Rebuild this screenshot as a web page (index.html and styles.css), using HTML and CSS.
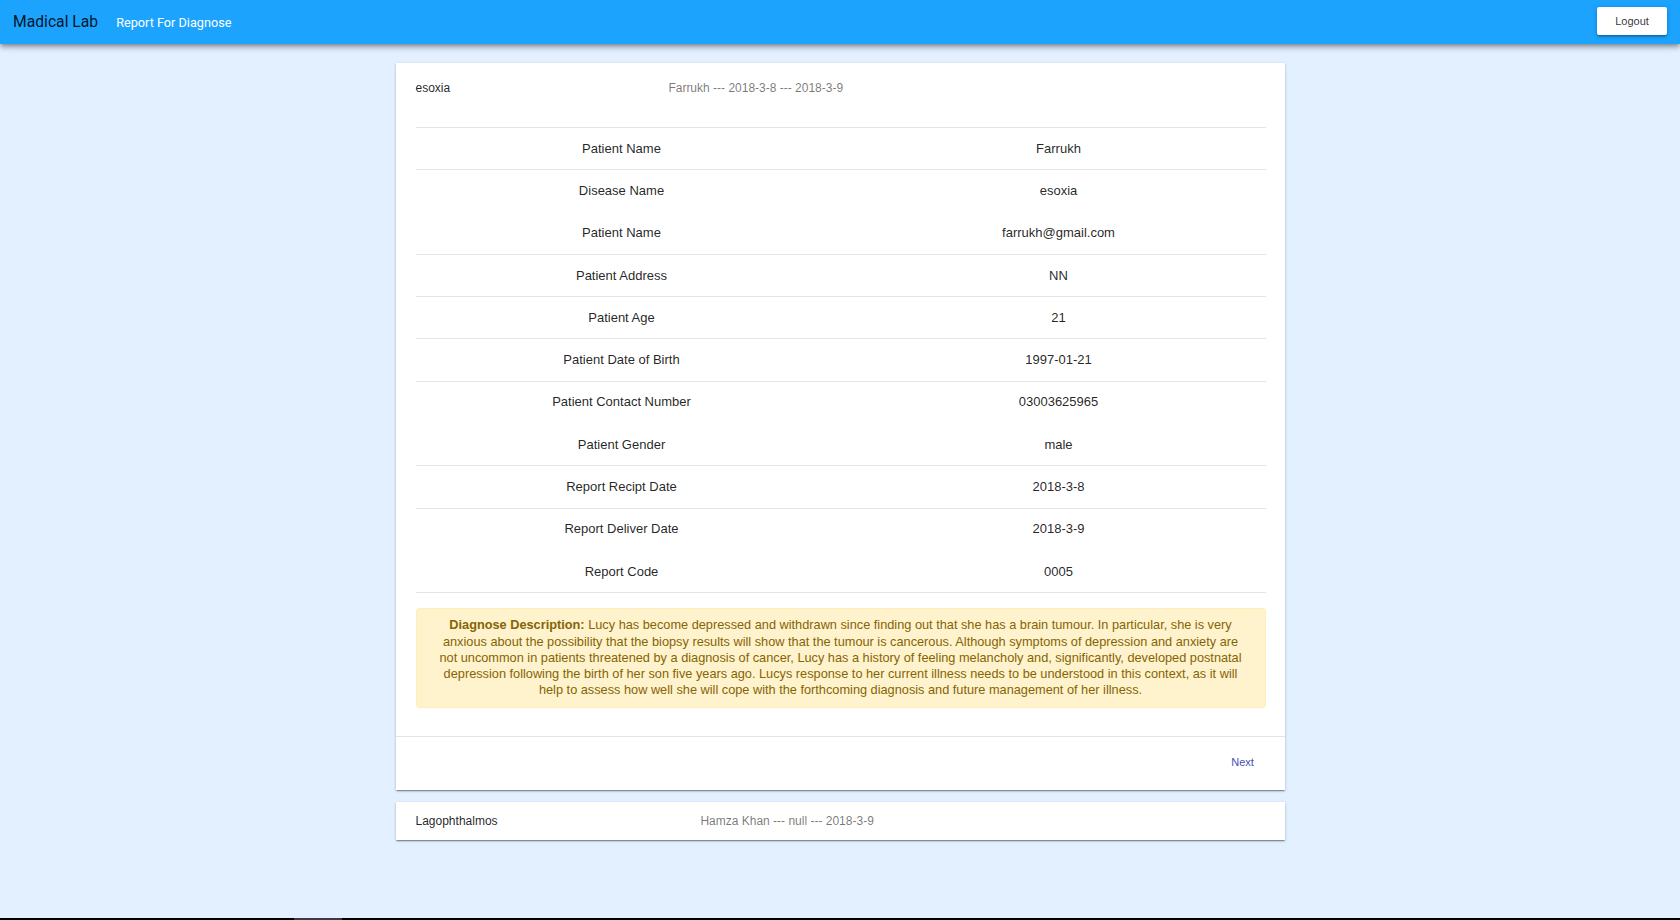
FILE: index.html
```html
<!DOCTYPE html>
<html lang="en">
<head>
<meta charset="utf-8">
<title>Madical Lab</title>
<link rel="stylesheet" href="styles.css">
</head>
<body>
<div class="page">
  <header class="appbar">
    <div class="brand">Madical Lab</div>
    <div class="nav-link">Report For Diagnose</div>
    <div class="spacer"></div>
    <button class="logout">Logout</button>
  </header>

  <main class="main">
    <section class="panel">
      <div class="summary">
        <div class="heading">esoxia</div>
        <div class="secondary">Farrukh --- 2018-3-8 --- 2018-3-9</div>
      </div>
      <div class="details">
        <div class="table">
          <div class="row"><div class="cell label">Patient Name</div><div class="cell value">Farrukh</div></div>
          <div class="row no-line"><div class="cell label">Disease Name</div><div class="cell value">esoxia</div></div>
          <div class="row"><div class="cell label">Patient Name</div><div class="cell value">farrukh@gmail.com</div></div>
          <div class="row"><div class="cell label">Patient Address</div><div class="cell value">NN</div></div>
          <div class="row"><div class="cell label">Patient Age</div><div class="cell value">21</div></div>
          <div class="row"><div class="cell label">Patient Date of Birth</div><div class="cell value">1997-01-21</div></div>
          <div class="row no-line"><div class="cell label">Patient Contact Number</div><div class="cell value">03003625965</div></div>
          <div class="row"><div class="cell label">Patient Gender</div><div class="cell value">male</div></div>
          <div class="row"><div class="cell label">Report Recipt Date</div><div class="cell value">2018-3-8</div></div>
          <div class="row no-line"><div class="cell label">Report Deliver Date</div><div class="cell value">2018-3-9</div></div>
          <div class="row"><div class="cell label">Report Code</div><div class="cell value">0005</div></div>
        </div>
        <p class="alert"><strong>Diagnose Description:</strong> Lucy has become depressed and withdrawn since finding out that she has a brain tumour. In particular, she is very anxious about the possibility that the biopsy results will show that the tumour is cancerous. Although symptoms of depression and anxiety are not uncommon in patients threatened by a diagnosis of cancer, Lucy has a history of feeling melancholy and, significantly, developed postnatal depression following the birth of her son five years ago. Lucys response to her current illness needs to be understood in this context, as it will help to assess how well she will cope with the forthcoming diagnosis and future management of her illness.</p>
      </div>
      <div class="actions">
        <button class="btn-next">Next</button>
      </div>
    </section>

    <section class="panel collapsed">
      <div class="summary short">
        <div class="heading">Lagophthalmos</div>
        <div class="secondary">Hamza Khan --- null --- 2018-3-9</div>
      </div>
    </section>
  </main>

  <div class="bottom-strip"><div class="strip-mark"></div></div>
</div>
</body>
</html>
```

FILE: styles.css
```css
html, body {
  margin: 0;
  padding: 0;
}

body {
  background: #e3f0ff;
  font-family: "Liberation Sans", Arial, sans-serif;
  color: rgba(0, 0, 0, 0.87);
}

.page {
  min-height: 100vh;
  display: flex;
  flex-direction: column;
}

.appbar {
  position: relative;
  z-index: 2;
  height: 44px;
  background: #1ba3fe;
  display: flex;
  align-items: center;
  padding: 0 13px;
  box-sizing: border-box;
  box-shadow: 0 2px 4px -1px rgba(0, 0, 0, 0.3), 0 4px 5px 0 rgba(0, 0, 0, 0.18), 0 1px 10px 0 rgba(0, 0, 0, 0.12);
}

.brand {
  font-family: Roboto, "Open Sans", sans-serif;
  font-size: 15.7px;
  color: rgba(0, 0, 0, 0.87);
  margin-top: -2px;
}

.nav-link {
  font-family: Roboto, "Open Sans", sans-serif;
  font-size: 12.7px;
  color: #ffffff;
  margin-left: 18px;
}

.spacer {
  flex: 1;
}

.logout {
  width: 70px;
  height: 28px;
  margin-top: -3px;
  border: none;
  border-radius: 2px;
  background: #ffffff;
  color: rgba(0, 0, 0, 0.82);
  font-family: "Liberation Sans", Arial, sans-serif;
  font-size: 11px;
  padding: 0;
  box-shadow: 0 1px 5px 0 rgba(0, 0, 0, 0.2), 0 2px 2px 0 rgba(0, 0, 0, 0.14), 0 3px 1px -2px rgba(0, 0, 0, 0.12);
}

.main {
  flex: 1;
  padding-top: 19px;
}

.panel {
  width: 889px;
  margin: 0 auto;
  background: #ffffff;
  box-shadow: 0 1px 3px 0 rgba(0, 0, 0, 0.2), 0 1px 1px 0 rgba(0, 0, 0, 0.14), 0 2px 1px -1px rgba(0, 0, 0, 0.22);
}

.panel.collapsed {
  margin-top: 12px;
}

.summary {
  height: 48px;
  display: flex;
  align-items: center;
  padding: 1px 5px 0 20px;
  box-sizing: border-box;
  font-size: 12px;
}

.summary.short {
  height: 38px;
  padding-top: 0;
}

.heading {
  flex: 1 1 auto;
  color: rgba(0, 0, 0, 0.87);
}

.secondary {
  flex: 2 1 auto;
  color: rgba(0, 0, 0, 0.54);
}

.details {
  padding: 16px 19px 28px 20px;
}

.table {
  border-top: 1px solid #e4e4e4;
  font-size: 13px;
}

.row {
  display: grid;
  grid-template-columns: 412px 1fr;
  align-items: center;
  height: 42.3px;
  padding-bottom: 1px;
  box-sizing: border-box;
  border-bottom: 1px solid #e4e4e4;
}

.row.no-line {
  border-bottom-color: transparent;
}

.cell {
  text-align: center;
}

.value {
  padding-left: 24px;
}

.alert {
  margin: 15px 0 0;
  padding: 8px 16px;
  background: #fff3cd;
  border: 1px solid #ffeeba;
  border-radius: 3px;
  color: #856404;
  font-size: 12.75px;
  line-height: 16.25px;
  text-align: center;
}

.alert strong {
  font-weight: bold;
}

.actions {
  border-top: 1px solid #e4e4e4;
  height: 53px;
  display: flex;
  justify-content: flex-end;
  align-items: center;
  padding-right: 10px;
}

.btn-next {
  min-width: 64px;
  height: 32px;
  margin-top: -2px;
  border: none;
  background: transparent;
  color: #3f51b5;
  font-family: "Liberation Sans", Arial, sans-serif;
  font-size: 11px;
  padding: 0 8px;
}

.bottom-strip {
  height: 2px;
  background: #000000;
  display: flex;
}

.strip-mark {
  width: 48px;
  margin-left: 294px;
  background: #3a3a40;
}
```
